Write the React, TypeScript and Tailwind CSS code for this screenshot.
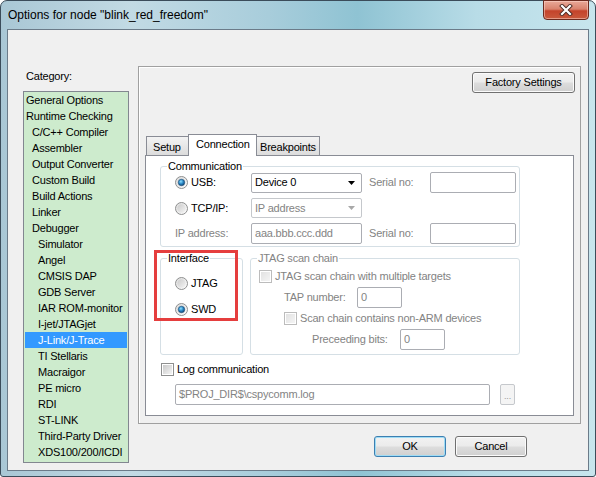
import React, { useId } from 'react';

// category tree: [label, indent level]
const categories: [string, number][] = [
  ['General Options', 0],
  ['Runtime Checking', 0],
  ['C/C++ Compiler', 1],
  ['Assembler', 1],
  ['Output Converter', 1],
  ['Custom Build', 1],
  ['Build Actions', 1],
  ['Linker', 1],
  ['Debugger', 1],
  ['Simulator', 2],
  ['Angel', 2],
  ['CMSIS DAP', 2],
  ['GDB Server', 2],
  ['IAR ROM-monitor', 2],
  ['I-jet/JTAGjet', 2],
  ['J-Link/J-Trace', 2],
  ['TI Stellaris', 2],
  ['Macraigor', 2],
  ['PE micro', 2],
  ['RDI', 2],
  ['ST-LINK', 2],
  ['Third-Party Driver', 2],
  ['XDS100/200/ICDI', 2],
];

const indent = ['pl-[1px]', 'pl-[7px]', 'pl-[13px]'];

const Radio: React.FC<{ checked?: boolean }> = ({ checked }) => {
  const id = useId();
  return (
    <svg width="13" height="13" viewBox="0 0 13 13" className="shrink-0">
      <defs>
        <linearGradient id={`${id}o`} x1="0" y1="0" x2="1" y2="1">
          <stop offset="0" stopColor="#dcdcdc" />
          <stop offset="1" stopColor="#fdfdfd" />
        </linearGradient>
        <linearGradient id={`${id}i`} x1="0" y1="0" x2="1" y2="1">
          <stop offset="0" stopColor="#cbcbcb" />
          <stop offset="1" stopColor="#f4f4f4" />
        </linearGradient>
        <radialGradient id={`${id}d`} cx="0.4" cy="0.35" r="0.7">
          <stop offset="0" stopColor="#8fe0ff" />
          <stop offset="0.5" stopColor="#2c8ac8" />
          <stop offset="1" stopColor="#0c3f6e" />
        </radialGradient>
      </defs>
      <circle cx="6.5" cy="6.5" r="6" fill={`url(#${id}o)`} stroke="#8e8f8f" strokeWidth="1" />
      <circle cx="6.5" cy="6.5" r="4.2" fill={`url(#${id}i)`} />
      {checked && <circle cx="6.5" cy="6.5" r="3.2" fill={`url(#${id}d)`} stroke="#1b4d78" strokeWidth="0.6" />}
    </svg>
  );
};

const Check: React.FC<{ disabled?: boolean }> = ({ disabled }) => (
  <div
    className={`flex h-[13px] w-[13px] shrink-0 items-center justify-center border bg-white ${
      disabled ? 'border-[#bcbcbc]' : 'border-[#8e8f8f]'
    }`}
  >
    <div
      className={`h-[9px] w-[9px] ${
        disabled
          ? 'bg-[linear-gradient(135deg,#e2e2e2,#f4f4f4)]'
          : 'bg-[linear-gradient(135deg,#c9c9c9,#f4f4f4)]'
      }`}
    />
  </div>
);

const Combo: React.FC<{ value: string; disabled?: boolean }> = ({ value, disabled }) => (
  <div
    className={`flex h-[20px] w-[111px] items-center rounded-[2px] border bg-white pl-[3px] ${
      disabled ? 'border-[#c5c8cc] text-[#838383]' : 'border-[#abadb3] text-black'
    }`}
  >
    <span className="flex-1">{value}</span>
    <svg width="7" height="4" viewBox="0 0 7 4" className="mr-[6px]">
      <path d="M0 0h7L3.5 4z" fill={disabled ? '#a8a8a8' : '#000'} />
    </svg>
  </div>
);

const Field: React.FC<{ value?: string; className: string }> = ({ value, className }) => (
  <div
    className={`flex items-center rounded-[2px] border border-[#abadb3] bg-white pl-[3px] text-[#838383] ${className}`}
  >
    {value}
  </div>
);

const WinButton: React.FC<{ label: string; className: string; isDefault?: boolean }> = ({
  label,
  className,
  isDefault,
}) => (
  <div
    className={`flex items-center justify-center rounded-[3px] border bg-[linear-gradient(180deg,#f2f2f2_0%,#ebebeb_48%,#dddddd_52%,#cfcfcf_100%)] text-black ${
      isDefault
        ? 'border-[#3c7fb1] shadow-[inset_0_0_0_1px_#9fdcf5]'
        : 'border-[#707070] shadow-[inset_0_0_0_1px_#fbfbfb]'
    } ${className}`}
  >
    {label}
  </div>
);

const Group: React.FC<{ label: string; muted?: boolean; className: string; children: React.ReactNode }> = ({
  label,
  muted,
  className,
  children,
}) => (
  <div className={`relative rounded-[3px] border border-[#d5dfe5] ${className}`}>
    <span
      className={`absolute left-[6px] top-[-7px] bg-white px-[1px] leading-[13px] ${
        muted ? 'text-[#838383]' : 'text-black'
      }`}
    >
      {label}
    </span>
    {children}
  </div>
);

export default function App() {
  return (
    <div className="flex h-[477px] w-[596px] flex-col rounded-t-[7px] rounded-b-[3px] border border-[#3b4c5a] bg-[linear-gradient(90deg,#a9c7d5_0%,#c2dae4_22%,#a8cddb_45%,#8fc3d3_60%,#b8dce7_80%,#c7e5ed_100%)] font-['Liberation_Sans',Arial,sans-serif] text-[11px] tracking-[-0.2px]">
      {/* Title bar */}
      <div className="flex h-[28px] shrink-0">
        <div className="self-center pl-[7px] text-[12px] tracking-normal text-black">
          Options for node "blink_red_freedom"
        </div>
        <div className="ml-auto mr-[6px] -mt-px flex h-[20px] w-[46px] items-center justify-center rounded-b-[4px] border border-[#6b2a1f] bg-[linear-gradient(180deg,#e9a999_0%,#d9826d_45%,#c4432b_55%,#c95a3d_100%)] shadow-[inset_0_0_0_1px_rgba(255,220,210,0.5)]">
          <svg width="14" height="12" viewBox="0 0 14 12">
            <path d="M3 2l8 8M11 2l-8 8" stroke="#4a2a24" strokeWidth="4" strokeLinecap="square" />
            <path d="M3 2l8 8M11 2l-8 8" stroke="#ffffff" strokeWidth="2.2" strokeLinecap="square" />
          </svg>
        </div>
      </div>

      {/* Client area */}
      <div className="mx-[6px] flex h-[442px] shrink-0 border border-[#6b7b89] bg-[#f0f0f0]">
        {/* Category column */}
        <div className="flex flex-col pl-[15px] pt-[40px]">
          <div className="ml-[3px] leading-[13px] text-black">Category:</div>
          <div className="mt-[8px] h-[372px] w-[106px] border border-[#828790] bg-[#cdebcd] px-[1px]">
            {categories.map(([name, level]) => {
              const selected = name === 'J-Link/J-Trace';
              return (
                <div
                  key={name}
                  className={`h-[16px] whitespace-nowrap leading-[16px] ${indent[level]} ${
                    selected ? 'bg-[#3399ff] text-white' : 'text-black'
                  }`}
                >
                  {name}
                </div>
              );
            })}
          </div>
        </div>

        {/* Right side */}
        <div className="ml-[9px] flex w-[443px] flex-col pt-[36px]">
          <div className="flex h-[358px] flex-col border border-[#a0a0a0] shadow-[inset_1px_1px_0_#ffffff] pb-[7px] pt-[5px]">
            <div className="flex justify-end pr-[5px]">
              <WinButton label="Factory Settings" className="h-[21px] w-[103px]" />
            </div>

            {/* Tabs */}
            <div className="mt-[41px] flex h-[21px] items-end pl-[7px]">
              <div className="flex h-[19px] w-[44px] items-center border border-b-0 border-[#898c95] bg-[linear-gradient(180deg,#f3f3f3,#dcdcdc)] pl-[6px] pt-[2px]">
                Setup
              </div>
              <div className="relative z-10 -mx-[2px] -mb-px flex h-[22px] w-[69px] items-center border border-b-0 border-[#898c95] bg-white pb-[2px] pl-[7px]">
                Connection
              </div>
              <div className="flex h-[19px] w-[65px] items-center border border-b-0 border-l-0 border-[#898c95] bg-[linear-gradient(180deg,#f3f3f3,#dcdcdc)] pl-[5px] pt-[2px]">
                Breakpoints
              </div>
            </div>

            {/* Tab page */}
            <div className="relative mx-[6px] h-[261px] border border-[#898c95] bg-white">
              <Group label="Communication" className="ml-[14px] mt-[10px] h-[81px] w-[360px] pt-[3px]">
                <div className="flex h-[25px] items-center pl-[14px]">
                  <div className="flex w-[76px] items-center">
                    <Radio checked />
                    <span className="ml-[3px]">USB:</span>
                  </div>
                  <Combo value="Device 0" />
                  <span className="ml-[7px] w-[61px] text-[#838383]">Serial no:</span>
                  <Field className="h-[21px] w-[86px]" />
                </div>
                <div className="flex h-[26px] items-center pl-[14px]">
                  <div className="flex w-[76px] items-center">
                    <Radio />
                    <span className="ml-[3px]">TCP/IP:</span>
                  </div>
                  <Combo value="IP address" disabled />
                </div>
                <div className="flex h-[25px] items-center pl-[14px]">
                  <span className="w-[76px] text-[#838383]">IP address:</span>
                  <Field value="aaa.bbb.ccc.ddd" className="h-[21px] w-[111px]" />
                  <span className="ml-[7px] w-[61px] text-[#838383]">Serial no:</span>
                  <Field className="h-[21px] w-[86px]" />
                </div>
              </Group>

              <div className="ml-[14px] mt-[11px] flex gap-[7px]">
                <Group label="Interface" className="h-[97px] w-[83px] pt-[11px]">
                  <div className="flex h-[26px] items-center pl-[14px]">
                    <Radio />
                    <span className="ml-[3px]">JTAG</span>
                  </div>
                  <div className="flex h-[26px] items-center pl-[14px]">
                    <Radio checked />
                    <span className="ml-[3px]">SWD</span>
                  </div>
                </Group>

                <Group label="JTAG scan chain" muted className="h-[97px] w-[270px] pt-[7px] text-[#838383]">
                  <div className="flex h-[21px] items-center pl-[8px]">
                    <Check disabled />
                    <span className="ml-[3px]">JTAG scan chain with multiple targets</span>
                  </div>
                  <div className="flex h-[21px] items-center pl-[33px]">
                    <span className="w-[73px]">TAP number:</span>
                    <Field value="0" className="h-[21px] w-[45px]" />
                  </div>
                  <div className="flex h-[21px] items-center pl-[33px]">
                    <Check disabled />
                    <span className="ml-[3px]">Scan chain contains non-ARM devices</span>
                  </div>
                  <div className="flex h-[21px] items-center pl-[61px]">
                    <span className="w-[88px]">Preceeding bits:</span>
                    <Field value="0" className="h-[21px] w-[45px]" />
                  </div>
                </Group>
              </div>

              <div className="ml-[15px] mt-[8px] flex h-[13px] items-center">
                <Check />
                <span className="ml-[3px]">Log communication</span>
              </div>
              <div className="ml-[29px] mt-[8px] flex items-center">
                <Field value="$PROJ_DIR$\cspycomm.log" className="h-[21px] w-[315px]" />
                <div className="ml-[10px] flex h-[21px] w-[15px] items-end justify-center rounded-[2px] border border-[#c5c8cc] bg-[#f4f4f4] pb-[3px] text-[9px] leading-none text-[#9a9a9a]">
                  ...
                </div>
              </div>

              {/* red highlight drawn over the Interface group */}
              <div className="pointer-events-none absolute left-[8px] top-[94px] h-[71px] w-[84px] border-[3px] border-[#e53e3e]" />
            </div>
          </div>

          <div className="mt-[12px] flex justify-end gap-[9px] pr-[54px]">
            <WinButton label="OK" isDefault className="h-[21px] w-[72px]" />
            <WinButton label="Cancel" className="h-[21px] w-[72px]" />
          </div>
        </div>
      </div>
    </div>
  );
}
